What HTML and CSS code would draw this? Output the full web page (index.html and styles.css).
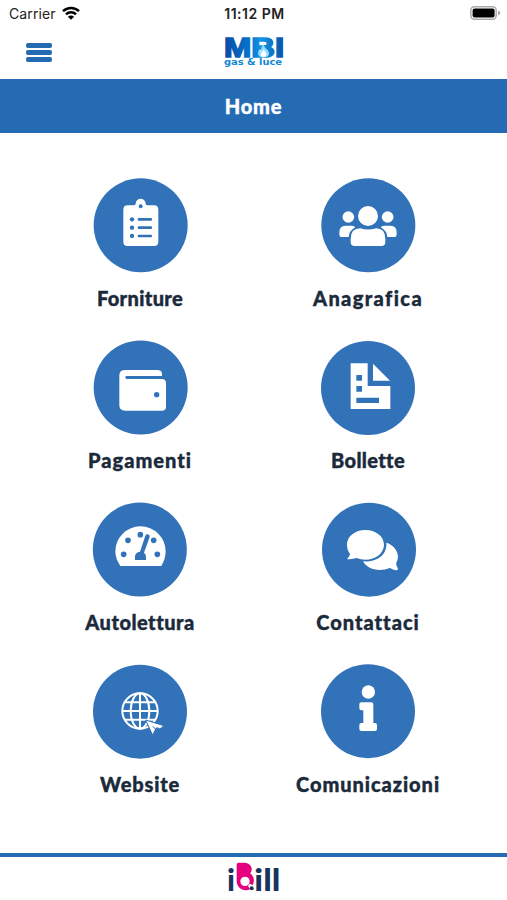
FILE: index.html
```html
<!DOCTYPE html>
<html lang="it">
	<head>
		<meta charset="utf-8">
		<title>MBI gas &amp; luce</title>
		<meta name="viewport" content="width=device-width,initial-scale=1.0">
		<link rel="stylesheet" href="styles.css">
	</head>
	<body>
		<!-- Status bar -->
		<div class="status">
			<div class="carrier">
				<span>Carrier</span>
				<svg class="wifi" viewBox="0 0 18 14">
					<g fill="none" stroke="#000" stroke-width="2.5">
						<path d="M1 5.2a11.4 11.4 0 0 1 16 0"/>
						<path d="M4 8.3a7 7 0 0 1 10 0"/>
					</g>
					<path d="M9 13.8L5.9 10.7a4.4 4.4 0 0 1 6.2 0z"/>
				</svg>
			</div>
			<span class="time">11:12 PM</span>
			<svg class="battery" viewBox="0 0 31 14">
				<rect x=".8" y=".8" width="25.4" height="12.4" rx="3.6" fill="#fff" stroke="#aaa" stroke-width="1.5"/>
				<rect x="2.6" y="2.5" width="22" height="9" rx="2"/>
				<path d="M28 4.5q2.4 .8 2.4 2.5t-2.4 2.5z" fill="#aaa"/>
			</svg>
		</div>
		<!-- Header -->
		<div class="header">
			<div class="burger"><i></i><i></i><i></i></div>
			<svg class="logo" viewBox="0 0 62 34">
				<defs>
					<linearGradient id="mbi" x1="0" x2="1" y1="0" y2="0">
						<stop offset="0" stop-color="#0a4ba5"/>
						<stop offset=".42" stop-color="#0672cc"/>
						<stop offset=".62" stop-color="#1496e4"/>
						<stop offset="1" stop-color="#084fa8"/>
					</linearGradient>
				</defs>
				<text class="mbi" x="1" y="21.500" textLength="60" lengthAdjust="spacingAndGlyphs" fill="url(#mbi)">MBI</text>
				<path d="M40.500 9c0 4 6.500 6 5.500 10.500q-1 3-5.500 3c-5 0-7-4-4-8q.7 1.500 1.500 2c0-3 .5-5 2.500-7.500z" fill="#8fdcff"/>
				<path d="M41 14c0 2.500 3 3.500 2.500 6q-.5 2-3 2c-3 0-3.300-2.500-2-4.500z" fill="#fff"/>
				<text class="gas" x="1" y="30" textLength="58" lengthAdjust="spacingAndGlyphs">gas &amp; luce</text>
			</svg>
		</div>
		<div class="title">Home</div>
		<!-- Menu -->
		<div class="menu">
			<div class="item">
				<svg viewBox="36 21 288 288">
					<circle class="disc" cx="182" cy="166" r="141"/>
					<path fill-rule="evenodd" d="M143 106H161Q166 106 167 101A15 15 0 0 1 197 101Q198 106 203 106H222Q235 106 235 119V215Q235 228 222 228H143Q130 228 130 215V119Q130 106 143 106ZM182 103a6 6 0 1 0 .1 0Z"/>
					<g class="cut">
						<circle cx="156" cy="148" r="6.500"/><circle cx="156" cy="173" r="6.500"/><circle cx="156" cy="198" r="6.500"/>
						<rect x="173" y="144" width="43" height="8" rx="3"/>
						<rect x="173" y="169" width="43" height="8" rx="3"/>
						<rect x="173" y="194" width="43" height="8" rx="3"/>
					</g>
				</svg>
				<span class="forniture">Forniture</span>
			</div>
			<div class="item">
				<svg viewBox="90 21 288 288">
					<circle class="disc" cx="235" cy="166" r="141"/>
					<circle cx="175" cy="141" r="17.500"/>
					<circle cx="293" cy="141" r="17.500"/>
					<path d="M148 194V188Q148 167 166 167H185Q193 167 196 172Q177 183 176 201H155Q148 201 148 194Z"/>
					<path d="M320 194V188Q320 167 302 167H283Q275 167 272 172Q291 183 292 201H313Q320 201 320 194Z"/>
					<circle cx="234" cy="138" r="30"/>
					<path d="M182 216V207Q182 175 211 175Q234 182 258 175Q286 175 286 207V216Q286 228 274 228H194Q182 228 182 216Z"/>
				</svg>
				<span class="anagrafica">Anagrafica</span>
			</div>
			<div class="item">
				<svg viewBox="36 12 288 288">
					<circle class="disc" cx="182" cy="157.500" r="141"/>
					<path d="M136 105H232Q244 105 246 115V123H139Q136 123 136 127T139 132H245Q258 132 258 144V215Q258 227 245 227H136Q118 227 118 211V121Q118 105 136 105Z"/>
					<circle class="cut" cx="230" cy="179" r="8"/>
				</svg>
				<span class="pagamenti">Pagamenti</span>
			</div>
			<div class="item">
				<svg viewBox="90 12 288 288">
					<circle class="disc" cx="234" cy="159" r="141"/>
					<path d="M182 85H233V153H301V222H182ZM249 86L300 137H249Z"/>
					<path class="cut" d="M199 120h17v17h-17zM199 153h17v17h-17zM199 188h68v16h-68z"/>
				</svg>
				<span class="bollette">Bollette</span>
			</div>
			<div class="item">
				<svg viewBox="36 18 288 288">
					<circle class="disc" cx="179.500" cy="163.500" r="141"/>
					<path d="M121 213Q106 191 106 169A75.500 75 0 0 1 257 169Q257 191 244 213Z"/>
					<g class="cut">
						<circle cx="131" cy="178" r="8.500"/><circle cx="144" cy="136" r="8.500"/><circle cx="181" cy="119" r="8.500"/>
						<circle cx="221" cy="136" r="8.500"/><circle cx="232" cy="178" r="8.500"/>
						<path d="M165 195V184Q166 172 180 170L196 122Q198 117 204 118Q210 120 209 126L192 173Q198 177 198 185V195Z"/>
					</g>
				</svg>
				<span class="autolettura">Autolettura</span>
			</div>
			<div class="item">
				<svg viewBox="90 18 288 288">
					<circle class="disc" cx="237" cy="164" r="141"/>
					<path d="M289 143C316 151 333 180 319 203Q317 209 324 220Q324 227 318 226Q309 225 300 219C269 231 233 225 219 199C258 202 292 182 289 143Z"/>
					<path d="M226 105C257 105 282 124 282 149S257 194 226 194Q212 194 200 189Q190 192 177 193Q169 193 174 188Q180 182 180 176Q171 166 171 149C171 124 196 105 226 105Z"/>
				</svg>
				<span class="contattaci">Contattaci</span>
			</div>
			<div class="item">
				<svg viewBox="36 24 288 288">
					<circle class="disc" cx="180" cy="170" r="141"/>
					<g class="line">
						<circle cx="180" cy="168" r="53"/>
						<ellipse cx="180" cy="168" rx="28" ry="53"/>
						<path d="M180 115V221M134 142H226M126 168H234M134 194H226"/>
					</g>
					<path class="pointer" d="M197 195L252 212L240 222L230 218L226 224L218 241Z"/>
					<path class="slit" d="M219 214L234 232"/>
				</svg>
				<span class="website">Website</span>
			</div>
			<div class="item">
				<svg viewBox="90 24 288 288">
					<circle class="disc" cx="234" cy="168.500" r="141"/>
					<circle cx="235" cy="111" r="20"/>
					<path d="M214 142H244Q250 142 250 148V204H255Q261 204 261 210V222Q261 228 255 228H214Q208 228 208 222V210Q208 204 214 204H220V166H214Q208 166 208 160V148Q208 142 214 142Z"/>
				</svg>
				<span class="comunicazioni">Comunicazioni</span>
			</div>
		</div>
		<!-- Footer -->
		<div class="footer">
			<svg viewBox="0 0 165 105">
				<g class="ibill">
					<text x="3" y="89">i</text>
					<text x="85" y="89" textLength="78" lengthAdjust="spacingAndGlyphs">ill</text>
				</g>
				<path class="pink" fill-rule="evenodd" d="M38 5H54C77 5 83 26 72 37C84 45 87 60 80 72L71 68L66 76L73 84C55 94 32 82 32 60V12Q32 5 38 5ZM57 47a14 14 0 1 0 .1 0Z"/>
				<circle class="dot" cx="77" cy="82" r="6"/>
			</svg>
		</div>
	</body>
</html>
```
FILE: styles.css
```css
* {
	box-sizing: border-box;
}
html, body {
	height: 100%;
	margin: 0;
}
body {
	display: flex;
	flex-direction: column;
	background: #fff;
	font-family: Lato, "Open Sans", sans-serif;
}
svg {
	display: block;
	overflow: visible;
}
.status {
	display: grid;
	grid-template-columns: 1fr auto 1fr;
	align-items: center;
	height: 28px;
	padding: 0 6px 0 9px;
	font: 14px/28px Inter, sans-serif;
	color: #222;
}
.carrier {
	display: flex;
	align-items: center;
	gap: 6px;
	letter-spacing: .1px;
}
.wifi {
	width: 18px;
	height: 14px;
	margin-top: -2px;
}
.time {
	font-weight: 600;
	letter-spacing: .5px;
	margin-right: 1px;
}
.battery {
	width: 31px;
	height: 14px;
	justify-self: end;
	margin-top: -2px;
}
.header {
	display: grid;
	grid-template-columns: 1fr 62px 1fr;
	height: 51px;
	padding-top: 7px;
}
.burger {
	display: flex;
	flex-direction: column;
	gap: 2.500px;
	padding: 8px 0 0 26px;
}
.burger i {
	width: 26px;
	height: 4.500px;
	border-radius: 2px;
	background: #246bb4;
}
.logo {
	width: 62px;
	height: 34px;
}
.mbi {
	font: bold 27px "Liberation Sans", sans-serif;
	stroke: url(#mbi);
	stroke-width: 1.6;
}
.gas {
	font: bold 9.500px "DejaVu Sans", sans-serif;
	fill: #1187d4;
}
.title {
	height: 54px;
	background: #246bb4;
	color: #fff;
	font-size: 20px;
	font-weight: 900;
	line-height: 55px;
	text-align: center;
	letter-spacing: .8px;
	-webkit-text-stroke: .4px #fff;
}
.menu {
	display: grid;
	grid-template-columns: 228px 228px;
	grid-auto-rows: 162px;
	padding: 44px 25px 0 26px;
	flex: 1;
}
.item {
	display: flex;
	flex-direction: column;
	align-items: center;
	font-size: 20px;
	font-weight: 900;
	line-height: 24px;
	color: #1b2a3b;
	white-space: nowrap;
}
.item svg {
	width: 96px;
	height: 96px;
	margin-bottom: 13px;
	fill: #fff;
}
.item span {
	-webkit-text-stroke: .4px #1b2a3b;
}
.forniture {
	letter-spacing: .35px;
}
.anagrafica {
	letter-spacing: 1.4px;
}
.pagamenti {
	letter-spacing: 1px;
}
.bollette {
	letter-spacing: .35px;
}
.autolettura {
	letter-spacing: .5px;
}
.contattaci {
	letter-spacing: 1px;
}
.website {
	letter-spacing: .8px;
}
.comunicazioni {
	letter-spacing: .95px;
}
.item .disc, .item .cut {
	fill: #3172b9;
}
.line {
	fill: none;
	stroke: #fff;
	stroke-width: 6;
}
.pointer {
	stroke: #3172b9;
	stroke-width: 3;
}
.slit {
	stroke: #3172b9;
	stroke-width: 3;
}
.footer {
	display: flex;
	justify-content: center;
	height: 47px;
	border-top: 4px solid #246bb4;
}
.footer svg {
	width: 55px;
	height: 35px;
	margin-top: 4px;
}
.ibill {
	font: 900 92px Lato, sans-serif;
	fill: #19335c;
}
.pink {
	fill: #e6007e;
}
.dot {
	fill: #19335c;
}
```
